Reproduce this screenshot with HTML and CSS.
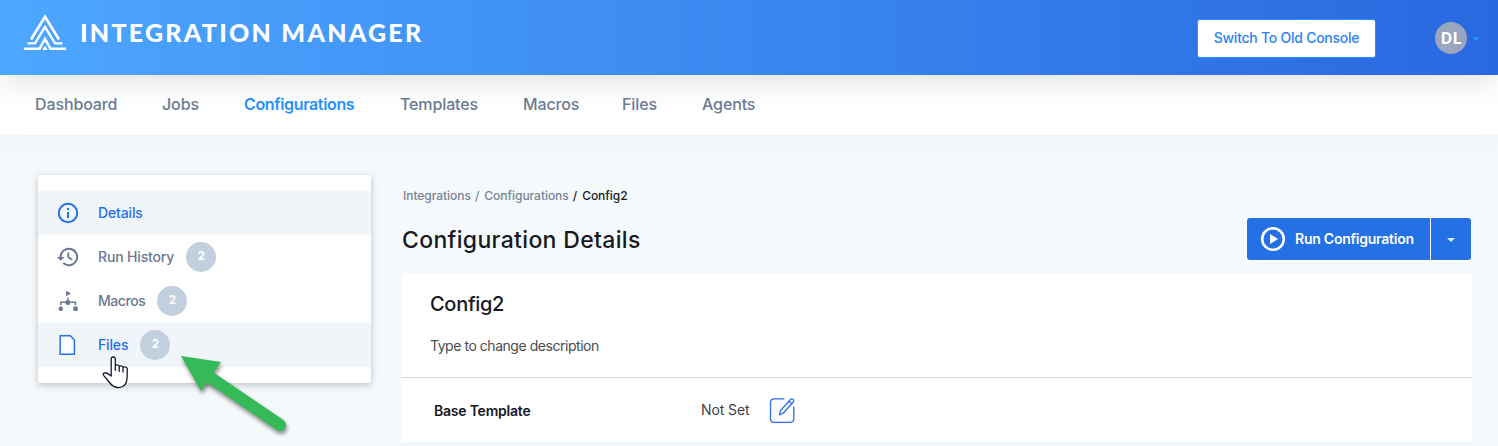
FILE: index.html
```html
<!DOCTYPE html>
<html lang="en">
<head>
<meta charset="utf-8">
<title>Integration Manager</title>
<link rel="stylesheet" href="styles.css">
</head>
<body>
<header class="topbar">
  <div class="brand">
    <svg class="brand-logo" width="42" height="37" viewBox="0 0 42 37" fill="none" stroke="#fff" stroke-width="2.3">
      <path d="M7 25.5L21 2.7L35 25.5" stroke-width="2.6"/>
      <path d="M3.5 29.3H11L21 12.8L31 29.3H38.5"/>
      <path d="M0 34.7H15.6L21 24.8L26.4 34.7H42" stroke-width="2.5"/>
      <path d="M18.3 36L21 31.7L23.7 36Z" fill="#fff" stroke="none"/>
    </svg>
    <span class="brand-name">INTEGRATION MANAGER</span>
  </div>
  <div class="account">
    <button class="switch"><span>Switch To Old Console</span></button>
    <span class="avatar">DL</span>
    <svg class="account-caret" width="8" height="4" viewBox="0 0 8 4"><path d="M0 0H8L4 4Z" fill="#2492ff"/></svg>
  </div>
</header>
<nav class="tabs">
  <a>Dashboard</a><a>Jobs</a><a class="active">Configurations</a><a>Templates</a><a>Macros</a><a>Files</a><a>Agents</a>
</nav>
<div class="layout">
  <aside class="side">
    <a class="side-item selected">
      <svg width="22" height="22" viewBox="0 0 22 22" fill="none" stroke="currentColor" stroke-width="2"><circle cx="11" cy="11" r="9.2"/><path d="M11 10V16M11 6V8"/></svg>
      <span>Details</span>
    </a>
    <a class="side-item">
      <svg width="22" height="22" viewBox="0 0 22 22" fill="none" stroke="currentColor" stroke-width="2"><path d="M3.5 12.2V11A8.3 8.3 0 1 1 6.2 17.1"/><path d="M0 11H7.5L3.7 14.8Z" fill="currentColor" stroke="none"/><path d="M11.3 6.5V11.3L15.3 13.7" stroke-width="1.8"/></svg>
      <span>Run History</span><b class="badge">2</b>
    </a>
    <a class="side-item macros">
      <svg width="22" height="22" viewBox="0 0 22 22" fill="currentColor"><path d="M9 .8L14 3.5L9 6.2Z"/><path d="M10 7.5h1.5v2H10z"/><circle cx="10.8" cy="12.3" r="2.6"/><circle cx="3.8" cy="18.7" r="2.2"/><path d="M16.3 16.5h4.4v4.4h-4.4z"/><path d="M3.8 15.2V12.3H8M13.5 12.3H18.4V15.2" fill="none" stroke="currentColor" stroke-width="1.5"/></svg>
      <span>Macros</span><b class="badge">2</b>
    </a>
    <a class="side-item selected files">
      <svg width="22" height="22" viewBox="0 0 22 22" fill="#fff" stroke="currentColor" stroke-width="1.5"><path d="M3.2 1.8H13.3L17.4 6V20.3H3.2Z"/></svg>
      <span>Files</span><b class="badge">2</b>
    </a>
  </aside>
  <main class="content">
    <div class="crumbs"><span>Integrations</span><i>/</i><span>Configurations</span><i class="dark">/</i><span class="dark">Config2</span></div>
    <div class="heading">
      <h1>Configuration Details</h1>
      <div class="run">
        <button class="run-main">
          <svg width="26" height="26" viewBox="0 0 26 26"><circle cx="13" cy="13" r="10.8" fill="none" stroke="#fff" stroke-width="2.6"/><path d="M10 8L18 13L10 18Z" fill="#fff"/></svg>
          <span>Run Configuration</span>
        </button>
        <button class="run-more"><svg width="8" height="4" viewBox="0 0 8 4"><path d="M0 0H8L4 4Z" fill="#dce8fb"/></svg></button>
      </div>
    </div>
    <section class="panel">
      <div class="panel-head">
        <h2>Config2</h2>
        <p>Type to change description</p>
      </div>
      <div class="field">
        <span class="field-label">Base Template</span>
        <span class="field-value">Not Set</span>
        <svg width="27" height="27" viewBox="0 0 27 27" fill="none" stroke="#2a70ea" stroke-width="1.3" stroke-linejoin="round" stroke-linecap="round"><path d="M15 1.8H5.2Q1.5 1.8 1.5 5.5V21.5Q1.5 25.4 5.2 25.4H21Q24.8 25.4 24.8 21.5V10"/><path d="M10.5 17.8L11.4 13.7L21.5 2.5Q22.8 1.3 24.1 2.4Q25.4 3.7 24.3 5L14.2 16.2ZM20 4.2L22.7 6.8"/></svg>
      </div>
    </section>
  </main>
</div>
<svg class="arrow" width="140" height="105" viewBox="170 341 140 105"><path d="M280 425L211 378" stroke="#36ba59" stroke-width="12" stroke-linecap="round"/><path d="M181 356L221 362L201 391Z" fill="#36ba59"/></svg>
<svg class="pointer" width="28" height="34" viewBox="0 0 28 34" fill="#fff" stroke="#15172b" stroke-width="1.3" stroke-linejoin="round" stroke-linecap="round"><path d="M9.2 18.8V4.1Q9.3 2 11.2 2Q13.2 2 13.3 4.1V10Q16.3 9.3 17.2 11.2Q20 10.3 21 12.2Q24 11.2 25.2 13.3V22Q25 27 23 29.8Q20 33 15.5 32.5Q11 32 8 28L1.6 20.3Q.5 18.3 2.5 17.8Q4.5 17.3 9.2 21ZM13.3 10V15.3M17.2 11.2V16.3M21 12.2V17"/></svg>
</body>
</html>
```
FILE: styles.css
```css
* { box-sizing: border-box; }
body {
  margin: 0;
  height: 446px;
  overflow: hidden;
  position: relative;
  background: #f5f9fc;
  font-family: Inter, "Open Sans", sans-serif;
  color: #17191f;
}
button { font: inherit; border: 0; padding: 0; }
span, h1, h2, p { white-space: nowrap; }
.topbar {
  position: relative;
  z-index: 2;
  display: flex;
  justify-content: space-between;
  height: 75px;
  padding: 0 18px 0 24px;
  background: linear-gradient(90deg, #4da7ff, #2968e0);
  box-shadow: 0 10px 30px -5px rgba(45, 60, 55, .17);
}
.brand { display: flex; align-items: flex-start; gap: 14px; padding-top: 14px; }
.brand-name {
  color: #fff;
  font: 900 25px/37px Lato, sans-serif;
  letter-spacing: 2.25px;
}
.account { display: flex; align-items: center; }
.switch {
  width: 179px;
  height: 39px;
  margin: 1px 59px 0 0;
  padding-bottom: 2px;
  background: #fff;
  border: 1px solid #2492ff;
  border-radius: 3px;
  color: #2b82f6;
  font-size: 14px;
  font-weight: 500;
  letter-spacing: -.25px;
}
.avatar {
  width: 32px;
  height: 32px;
  border-radius: 50%;
  background: #9aa5be;
  color: #fff;
  font: 700 16px/33px "Open Sans", sans-serif;
  text-align: center;
}
.account-caret { margin: 3px 0 0 5px; }
.tabs {
  display: grid;
  grid-template-columns: 127px 82px 156px 123px 99px 80px auto;
  align-items: center;
  height: 60px;
  padding: 0 0 2px 35px;
  background: #fff;
  box-shadow: 0 6px 30px rgba(45, 80, 100, .04);
  color: #6d7b94;
  font-size: 16px;
  font-weight: 500;
  letter-spacing: -.12px;
}
.tabs .active { color: #2492ff; font-weight: 600; letter-spacing: -.35px; }
.layout { display: flex; gap: 30px; padding: 40px 26px 0 38px; align-items: flex-start; }
.side {
  width: 333px;
  padding: 16px 0;
  background: #fff;
  border-radius: 2px;
  box-shadow: 0 2px 7px rgba(30, 40, 55, .27);
  color: #6b7890;
}
.side-item {
  display: flex;
  align-items: center;
  height: 44px;
  padding-left: 19px;
  font-size: 14px;
  font-weight: 500;
  letter-spacing: -.15px;
}
.side-item > span { margin-left: 19px; padding-bottom: 1px; }
.side-item.macros { letter-spacing: -.45px; }
.side-item.selected { background: #f0f5f9; color: #2470e8; }
.badge {
  width: 30px;
  height: 30px;
  margin-left: 12px;
  border-radius: 50%;
  background: #c2cfde;
  color: #fff;
  font: 700 11.5px/28px Inter, sans-serif;
  letter-spacing: 0;
  text-align: center;
}
.content { flex: 1; }
.crumbs { display: flex; align-items: center; height: 43px; padding: 0 0 2px 2px; font-size: 12px; font-weight: 500; letter-spacing: -.04px; color: #788394; }
.crumbs i { font-style: normal; margin: 0 5px 0 4px; }
.crumbs .dark { color: #17191f; }
.heading { display: flex; justify-content: space-between; align-items: center; height: 42px; padding: 0 1px; }
h1 { margin: 2px 0 0; font-size: 23px; line-height: 30px; font-weight: 500; letter-spacing: .33px; }
.run { display: flex; gap: 1px; height: 42px; background: #fff; box-shadow: 0 0 0 1px #fff; border-radius: 3px; overflow: hidden; }
.run button { display: flex; align-items: center; background: #2470e5; color: #fff; }
.run-main { width: 183px; padding-left: 13px !important; gap: 9px; font-size: 14px; font-weight: 600; letter-spacing: -.24px; }
.run-main span { padding-bottom: 1px; }
.run .run-more { width: 40px; justify-content: center; }
.run-more svg { margin-top: 2px; }
.panel { margin-top: 13px; background: #fff; height: 169px; box-shadow: 0 4px 0 #f0f5f9; }
.panel-head { height: 105px; padding: 17px 29px 0; border-bottom: 1px solid #d4dae4; }
h2 { margin: 0; font-size: 20px; line-height: 28px; font-weight: 500; letter-spacing: -.3px; }
p { margin: 18px 0 0; font-size: 14px; line-height: 20px; letter-spacing: -.46px; color: #4a4c50; }
.field { display: flex; align-items: center; height: 65px; padding-left: 33px; font-size: 14px; }
.field-label { width: 267px; font-weight: 600; letter-spacing: -.22px; padding-bottom: 1px; }
.field-value { width: 68px; color: #404246; padding-bottom: 3px; letter-spacing: -.1px; }
.arrow { position: absolute; left: 170px; top: 341px; filter: drop-shadow(1px 3px 2px rgba(0, 0, 0, .45)); }
.pointer { position: absolute; left: 102px; top: 355px; }
```
